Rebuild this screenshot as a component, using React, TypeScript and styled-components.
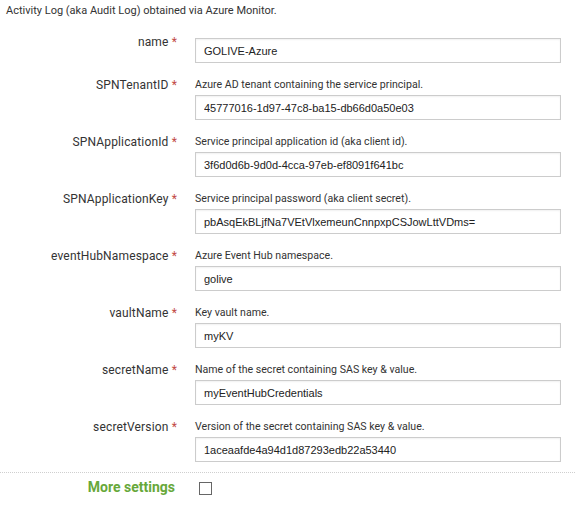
import React from "react";
import styled, { createGlobalStyle } from "styled-components";

interface FieldDef {
  name: string;
  help?: string;
  value: string;
}

const fields: FieldDef[] = [
  { name: "name", value: "GOLIVE-Azure" },
  {
    name: "SPNTenantID",
    help: "Azure AD tenant containing the service principal.",
    value: "45777016-1d97-47c8-ba15-db66d0a50e03",
  },
  {
    name: "SPNApplicationId",
    help: "Service principal application id (aka client id).",
    value: "3f6d0d6b-9d0d-4cca-97eb-ef8091f641bc",
  },
  {
    name: "SPNApplicationKey",
    help: "Service principal password (aka client secret).",
    value: "pbAsqEkBLjfNa7VEtVlxemeunCnnpxpCSJowLttVDms=",
  },
  {
    name: "eventHubNamespace",
    help: "Azure Event Hub namespace.",
    value: "golive",
  },
  { name: "vaultName", help: "Key vault name.", value: "myKV" },
  {
    name: "secretName",
    help: "Name of the secret containing SAS key & value.",
    value: "myEventHubCredentials",
  },
  {
    name: "secretVersion",
    help: "Version of the secret containing SAS key & value.",
    value: "1aceaafde4a94d1d87293edb22a53440",
  },
];

const App: React.FC = () => {
  return (
    <Page>
      <GlobalStyle />
      <Intro>Activity Log (aka Audit Log) obtained via Azure Monitor.</Intro>
      <Form>
        {fields.map((f) => (
          <Row key={f.name}>
            <Label>
              {f.name} <Required>*</Required>
            </Label>
            <Field $bare={!f.help}>
              {f.help && <Help>{f.help}</Help>}
              <Input defaultValue={f.value} />
            </Field>
          </Row>
        ))}
      </Form>
      <Separator />
      <MoreRow>
        <MoreLabel>More settings</MoreLabel>
        <Checkbox />
      </MoreRow>
    </Page>
  );
};
export default App;

const GlobalStyle = createGlobalStyle`
  body {
    margin: 0;
    background: #ffffff;
    font-family: Roboto, "Noto Sans", sans-serif;
    color: #333333;
  }
`;
const Page = styled.div`
  width: 575px;
  padding-top: 3px;
`;
const Intro = styled.div`
  padding-left: 6px;
  font-size: 11px;
  line-height: 16px;
  color: #333333;
`;
const Form = styled.div`
  display: flex;
  flex-direction: column;
  gap: 14px;
  margin-top: 15px;
  padding-right: 14px;
`;
const Row = styled.div`
  display: grid;
  grid-template-columns: 177px 1fr;
  column-gap: 18px;
`;
const Label = styled.div`
  text-align: right;
  font-size: 12px;
  letter-spacing: 0.15px;
  line-height: 16px;
  color: #333333;
`;
const Required = styled.span`
  color: #c24a44;
`;
const Field = styled.div<{ $bare: boolean }>`
  display: flex;
  flex-direction: column;
  gap: 2px;
  padding-top: ${(p) => (p.$bare ? "4px" : "0")};
`;
const Help = styled.div`
  font-size: 10.6px;
  line-height: 16px;
  color: #333333;
`;
const Input = styled.input`
  box-sizing: border-box;
  width: 100%;
  height: 25px;
  padding: 0 8px;
  border: 1px solid #cccccc;
  border-radius: 0;
  box-shadow: inset 0 1px 2px rgba(0, 0, 0, 0.06);
  font-family: "Liberation Sans", Arial, sans-serif;
  font-size: 11px;
  color: #222222;
  background: #ffffff;
  outline: none;
`;
const Separator = styled.div`
  margin-top: 10px;
  border-top: 1px dotted #cfcfcf;
`;
const MoreRow = styled.div`
  display: grid;
  grid-template-columns: 175px 1fr;
  column-gap: 24px;
  align-items: center;
  padding-top: 6px;
`;
const MoreLabel = styled.div`
  text-align: right;
  font-size: 14px;
  font-weight: 700;
  line-height: 16px;
  color: #67a83a;
`;
const Checkbox = styled.div`
  box-sizing: border-box;
  width: 13px;
  height: 13px;
  border: 1px solid #666666;
  background: #ffffff;
  margin-top: 3px;
`;
